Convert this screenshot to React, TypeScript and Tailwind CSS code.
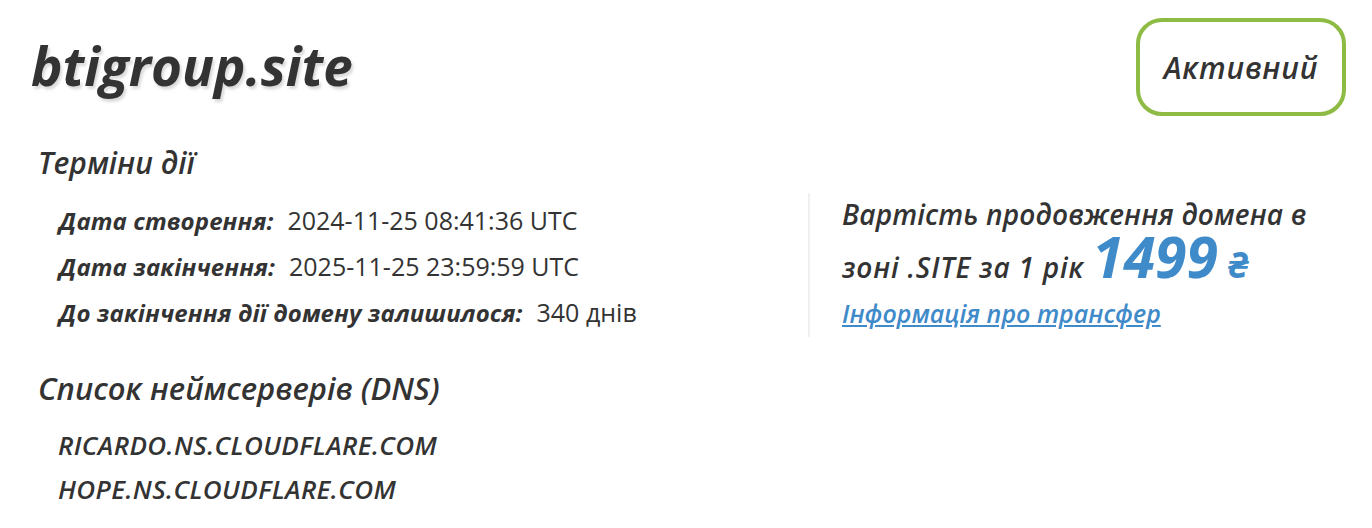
import React from 'react';

const rows = [
  { label: 'Дата створення:', value: '2024-11-25 08:41:36 UTC' },
  { label: 'Дата закінчення:', value: '2025-11-25 23:59:59 UTC' },
  { label: 'До закінчення дії домену залишилося:', value: '340 днів' },
];

const nameservers = ['RICARDO.NS.CLOUDFLARE.COM', 'HOPE.NS.CLOUDFLARE.COM'];

export default function App() {
  return (
    <div className="w-[1372px] h-[528px] bg-white text-[#333333] font-['Open_Sans','Noto_Sans',sans-serif] overflow-hidden">
      <div className="flex items-center justify-between pl-[31px] pr-[26px] pt-[18px]">
        <h1 className="text-[53px] font-bold italic leading-none -mt-[4px] [text-shadow:2px_3px_3px_rgba(0,0,0,0.15)]">
          btigroup.site
        </h1>
        <div className="w-[210px] h-[98px] rounded-[26px] border-4 border-[#8dbb43] flex items-center justify-center">
          <span className="text-[30px] italic font-semibold tracking-[0.8px]">Активний</span>
        </div>
      </div>

      <div className="pl-[38px] mt-[30px]">
        <h2 className="text-[30px] leading-[34px] italic font-semibold">Терміни дії</h2>

        <div className="flex mt-[18px]">
          <div className="w-[770px] pl-[21px]">
            {rows.map(row => (
              <div key={row.label} className="flex items-center h-[46px]">
                <span className="text-[24px] italic font-bold tracking-[0.1px]">{row.label}</span>
                <span className="ml-[14px] text-[25px]">{row.value}</span>
              </div>
            ))}
          </div>

          <div className="border-l-2 border-[#f0f0f0] pl-[32px] -mt-[5px] h-[144px]">
            <div className="text-[28px] leading-[48px] italic font-semibold -mt-[3px]">
              <div className="tracking-[0.15px]">Вартість продовження домена в</div>
              <div className="tracking-[0.8px] mt-[5px]">
                зоні .SITE за 1 рік{' '}
                <span className="leading-[0] text-[57px] font-bold text-[#3f8ac9] tracking-normal">1499</span>
                <span className="leading-[0] text-[36px] font-bold text-[#3f8ac9] ml-[10px]">₴</span>
              </div>
            </div>
            <a href="#" className="block mt-[7px] leading-[30px] text-[25px] italic font-semibold text-[#3f8ac9] underline">
              Інформація про трансфер
            </a>
          </div>
        </div>

        <h2 className="mt-[34px] text-[31px] leading-[34px] italic font-semibold">Список неймсерверів (DNS)</h2>
        <div className="pl-[20px] mt-[18px]">
          {nameservers.map(ns => (
            <div key={ns} className="h-[44px] leading-[44px] text-[26px] italic font-semibold tracking-[0.4px]">
              {ns}
            </div>
          ))}
        </div>
      </div>
    </div>
  );
}
